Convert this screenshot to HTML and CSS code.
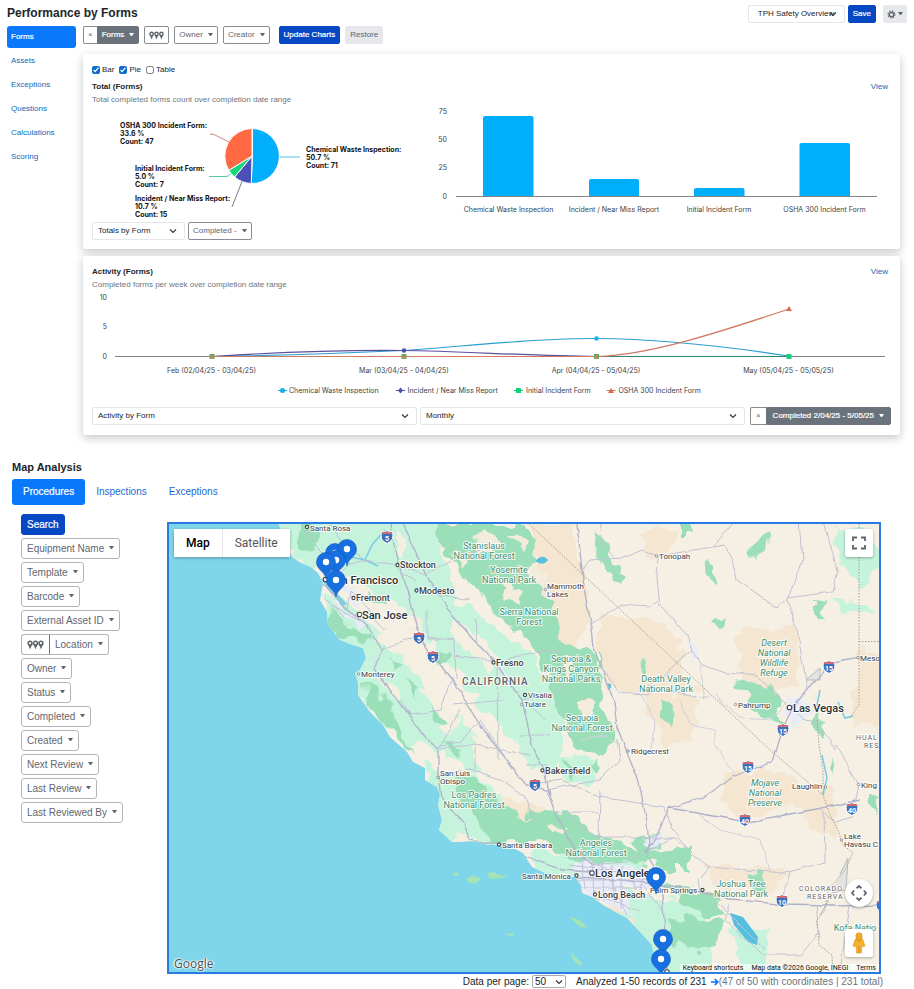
FILE: index.html
```html
<!DOCTYPE html>
<html lang="en">
<head>
<meta charset="utf-8">
<meta name="viewport" content="width=device-width, initial-scale=1">
<title>Performance by Forms</title>
<link rel="stylesheet" href="styles.css">
</head>
<body>
<svg class="defs" aria-hidden="true">
  <defs>
    <symbol id="chevron" viewBox="0 0 8 8"><path d="M1 2.500 4 5.500 7 2.500" fill="none" stroke="#343a40" stroke-width="1.200"/></symbol>
    <symbol id="markers" viewBox="0 0 15 9">
      <g fill="none" stroke="#5c636a" stroke-width="1.400"><circle cx="2.600" cy="2.900" r="1.700"/><circle cx="7.500" cy="2.900" r="1.700"/><circle cx="12.400" cy="2.900" r="1.700"/></g>
      <path d="M.9 4.200h3.400L2.600 8.400zM5.800 4.200h3.400L7.500 8.400zM10.700 4.200h3.400l-1.700 4.200z" fill="#5c636a"/>
    </symbol>
  </defs>
</svg>

<header class="top">
  <h1>Performance by Forms</h1>
  <div class="top-actions">
    <span class="pick pick-view"><select aria-label="Saved view"><option>TPH Safety Overview</option></select><svg><use href="#chevron"/></svg></span>
    <button class="btn primary save">Save</button>
    <button class="btn light gear" aria-label="Settings"><svg width="9" height="9" viewBox="0 0 9 9"><circle cx="4.500" cy="4.500" r="3.400" fill="none" stroke="#5c636a" stroke-width="1.200" stroke-dasharray="1.400 1.270"/><circle cx="4.500" cy="4.500" r="2.200" fill="none" stroke="#5c636a" stroke-width="1.300"/></svg><i class="caret"></i></button>
  </div>
</header>

<div class="performance">
  <nav class="side">
    <a class="active" href="#">Forms</a>
    <a href="#">Assets</a>
    <a href="#">Exceptions</a>
    <a href="#">Questions</a>
    <a href="#">Calculations</a>
    <a href="#">Scoring</a>
  </nav>
  <main class="content">
    <div class="toolbar">
      <span class="group"><button class="btn clear" aria-label="Clear forms">×</button><button class="btn dark">Forms<i class="caret"></i></button></span>
      <button class="btn" aria-label="Locations"><svg width="15" height="9"><use href="#markers"/></svg></button>
      <button class="btn">Owner<i class="caret"></i></button>
      <button class="btn">Creator<i class="caret"></i></button>
      <button class="btn primary update">Update Charts</button>
      <button class="btn light">Restore</button>
    </div>

    <section class="card">
      <div class="checks">
        <label><input type="checkbox" checked>Bar</label>
        <label><input type="checkbox" checked>Pie</label>
        <label><input type="checkbox">Table</label>
      </div>
      <div class="card-head"><h3>Total (Forms)</h3><a href="#">View</a></div>
      <p class="sub">Total completed forms count over completion date range</p>
      <div class="charts">
        <svg class="chart" viewBox="92 106 330 116" role="img" aria-label="Share of completed forms">
          <g stroke="#fff" stroke-width="1">
            <path d="M252.500 156V128.500A27.500 27.500 0 1 1 251.300 183.500Z" fill="#00aefb"/>
            <path d="M252 156 251.300 183.500A27.500 27.500 0 0 1 234.600 177Z" fill="#4b50b8"/>
            <path d="M252 156 234.600 177A27.500 27.500 0 0 1 228.800 170.300Z" fill="#15d77d"/>
            <path d="M252 156 228.800 170.300A27.500 27.500 0 0 1 252 128.500Z" fill="#ff6a43"/>
          </g>
          <g fill="none" stroke-width="1">
            <path d="M280 157H300" stroke="#59bfe3"/>
            <path d="M210 134 214 134.500 229 142" stroke="#c98a7d"/>
            <path d="M209 176.500H226Q229 176.500 231 173.500" stroke="#55c99b"/>
            <path d="M232 207 242 181.500" stroke="#7a7a90"/>
          </g>
          <g class="pie-text">
            <text x="120" y="128">OSHA 300 Incident Form:</text><text x="120" y="136">33.6 %</text><text x="120" y="144">Count: 47</text>
            <text x="135" y="171">Initial Incident Form:</text><text x="135" y="179">5.0 %</text><text x="135" y="187">Count: 7</text>
            <text x="135" y="201">Incident / Near Miss Report:</text><text x="135" y="209">10.7 %</text><text x="135" y="217">Count: 15</text>
            <text x="306" y="152">Chemical Waste Inspection:</text><text x="306" y="160">50.7 %</text><text x="306" y="168">Count: 71</text>
          </g>
        </svg>
        <svg class="chart" viewBox="422 106 469 116" role="img" aria-label="Completed forms by form">
          <g fill="#00aefb">
            <path d="M483 196V118q0-2 2-2h46.500q2 0 2 2v78z"/>
            <path d="M589 196V181q0-2 2-2h46q2 0 2 2v15z"/>
            <path d="M694 196V190q0-2 2-2h46.500q2 0 2 2v6z"/>
            <path d="M799.500 196V145q0-2 2-2h46.500q2 0 2 2v51z"/>
          </g>
          <path d="M456 196.500H877" stroke="#85888b"/>
          <g class="axis end"><text x="447" y="114">75</text><text x="447" y="142">50</text><text x="447" y="170">25</text><text x="447" y="199">0</text></g>
          <g class="axis mid"><text x="508.500" y="212">Chemical Waste Inspection</text><text x="614" y="212">Incident / Near Miss Report</text><text x="719" y="212">Initial Incident Form</text><text x="824.500" y="212">OSHA 300 Incident Form</text></g>
        </svg>
      </div>
      <div class="controls">
        <span class="pick pick-total"><select aria-label="Total grouping"><option>Totals by Form</option></select><svg><use href="#chevron"/></svg></span>
        <button class="btn">Completed -<i class="caret"></i></button>
      </div>
    </section>

    <section class="card activity">
      <div class="card-head"><h3>Activity (Forms)</h3><a href="#">View</a></div>
      <p class="sub">Completed forms per week over completion date range</p>
      <svg class="chart" viewBox="92 291 799 116" role="img" aria-label="Completed forms over time">
        <g class="axis end"><text x="107" y="300">10</text><text x="107" y="329">5</text><text x="107" y="359">0</text></g>
        <path d="M115 356.500H885" stroke="#85888b"/>
        <g fill="none" stroke-width="1.200">
          <path d="M212 356.500C300 355 350 353 404 350.500C460 347 530 338 596.500 338.500C660 339 730 347 789 356" stroke="#2a9fd0"/>
          <path d="M212 356.500C280 352 350 350 404 350.500C460 351 530 356 596.500 356.500" stroke="#5b4f9f"/>
          <path d="M596 356.500H789" stroke="#2f8570"/>
          <path d="M212 356.500H596.500C650 355 720 332 789 309" stroke="#cf7a62"/>
        </g>
        <circle cx="596.500" cy="338.500" r="2.300" fill="#18aee8"/><circle cx="404" cy="350.500" r="2.300" fill="#3e55b5"/>
        <g fill="#69a86c"><path d="M209.500 354h5v5h-5zM401.500 354h5v5h-5zM594 354h5v5h-5z"/></g>
        <g fill="#d88445"><path d="M210 358.500 212 355 214 358.500zM402 358.500 404 355 406 358.500zM594.500 358.500 596.500 355 598.500 358.500z"/></g>
        <path d="M786.500 354h5v5h-5z" fill="#16cf7c"/><path d="M786 311 789 306 792 311z" fill="#e0684f"/>
        <g class="axis mid"><text x="211.500" y="373">Feb (02/04/25 - 03/04/25)</text><text x="404" y="373">Mar (03/04/25 - 04/04/25)</text><text x="596" y="373">Apr (04/04/25 - 05/04/25)</text><text x="788.500" y="373">May (05/04/25 - 05/05/25)</text></g>
        <path d="M278 390.500h9" stroke="#2a9fd0"/><circle cx="282.500" cy="390.500" r="2.500" fill="#18aee8"/>
        <path d="M396 390.500h9" stroke="#5b4f9f"/><path d="M400.500 387.500 403 390.500 400.500 393.500 398 390.500z" fill="#4b4fae"/>
        <path d="M514 390.500h9" stroke="#27bb80"/><path d="M516 388h5v5h-5z" fill="#16cf7c"/>
        <path d="M606.500 390.500h9" stroke="#cf7a62"/><path d="M608 393 611 388 614 393z" fill="#e0684f"/>
        <g class="axis"><text x="289" y="393">Chemical Waste Inspection</text><text x="407.500" y="393">Incident / Near Miss Report</text><text x="526" y="393">Initial Incident Form</text><text x="618.500" y="393">OSHA 300 Incident Form</text></g>
      </svg>
      <div class="controls">
        <span class="pick grow"><select aria-label="Activity grouping"><option>Activity by Form</option></select><svg><use href="#chevron"/></svg></span>
        <span class="pick grow"><select aria-label="Interval"><option>Monthly</option></select><svg><use href="#chevron"/></svg></span>
        <span class="group"><button class="btn clear" aria-label="Clear dates">×</button><button class="btn dark">Completed 2/04/25 - 5/05/25<i class="caret"></i></button></span>
      </div>
    </section>
  </main>
</div>

<section class="analysis">
  <h2>Map Analysis</h2>
  <nav class="tabs"><a class="active" href="#">Procedures</a><a href="#">Inspections</a><a href="#">Exceptions</a></nav>
  <div class="map-layout">
    <div class="filters">
      <button class="btn primary">Search</button>
      <button class="btn">Equipment Name<i class="caret"></i></button>
      <button class="btn">Template<i class="caret"></i></button>
      <button class="btn">Barcode<i class="caret"></i></button>
      <button class="btn">External Asset ID<i class="caret"></i></button>
      <span class="group"><button class="btn" aria-label="Map locations"><svg width="17" height="10"><use href="#markers"/></svg></button><button class="btn">Location<i class="caret"></i></button></span>
      <button class="btn">Owner<i class="caret"></i></button>
      <button class="btn">Status<i class="caret"></i></button>
      <button class="btn">Completed<i class="caret"></i></button>
      <button class="btn">Created<i class="caret"></i></button>
      <button class="btn">Next Review<i class="caret"></i></button>
      <button class="btn">Last Review<i class="caret"></i></button>
      <button class="btn">Last Reviewed By<i class="caret"></i></button>
    </div>
    <div class="map-column">
      <div class="map">
        <svg class="map-art" viewBox="169 524 710 448" role="img" aria-label="Map of California and Nevada">
          <defs>
            <clipPath id="land"><path d="M278 520 282 535 292 557 301 563 311 567 318 573 323 583 320 600 327 612 328 625 340 640 353 645 363 648 366 658 360 670 355 673 358 682 358 695 370 712 383 725 390 737 407 752 413 762 425 768 425 780 437 787 440 795 438 805 442 820 439 830 452 842 473 841 488 845 507 845 523 853 532 867 545 873 575 877 581 885 582 893 592 897 603 905 627 918 643 935 652 945 655 962 662 975H885V520Z"/></clipPath>
            <filter id="rough" x="-5%" y="-5%" width="110%" height="110%"><feTurbulence type="fractalNoise" baseFrequency=".06" numOctaves="2" seed="4"/><feDisplacementMap in="SourceGraphic" scale="20" xChannelSelector="R" yChannelSelector="G"/></filter>
            <filter id="wobble" x="-5%" y="-5%" width="110%" height="110%"><feTurbulence type="fractalNoise" baseFrequency=".06" numOctaves="2" seed="9"/><feDisplacementMap in="SourceGraphic" scale="5" xChannelSelector="R" yChannelSelector="G"/></filter>
            <symbol id="pin" viewBox="-11 -11 22 30" overflow="visible"><path d="M0 17C-1 9-9.500 8-9.500 0A9.500 9.500 0 0 1 9.500 0C9.500 8 1 9 0 17Z" fill="#176fe0" stroke="#1059bd" stroke-width=".6"/><circle r="3.200" fill="#fff"/></symbol>
            <g id="shield"><path d="M-5-5.500Q-2.500-4.800 0-6.200Q2.500-4.800 5-5.500Q8.500 3 0 6.500Q-8.500 3-5-5.500Z" fill="#3b70bd" stroke="#fff" stroke-width="1"/><path d="M-4.800-5Q-2.500-4.300 0-5.700Q2.500-4.300 4.800-5L5.500-3H-5.500Z" fill="#d46a70"/></g>
          </defs>
          <rect x="165" y="520" width="720" height="456" fill="#7fd5ea"/>
          <g clip-path="url(#land)">
            <rect x="270" y="515" width="620" height="465" fill="#f5f0e3"/>
            <g filter="url(#rough)">
              <g fill="#f5e6d1">
                <path d="M600 615 650 620 685 640 680 672 700 690 670 696 610 690 596 650zM740 627H798V690L760 695 738 670zM728 770 775 772 810 790 800 808 740 818 722 800zM640 690 700 700 690 740 665 750 650 720zM530 523 570 523 585 570 590 620 570 660 550 640 540 600zM860 650H890V720L850 725zM610 905 690 925 700 970 640 975zM705 865 790 870 770 892 715 890zM640 530 675 528 670 560 645 555zM795 790 830 785 840 840 815 830z"/>
                <path d="M500 800 540 805 560 825 535 835 505 820zM620 900 650 905 640 925z"/>
              </g>
              <g fill="#c5f3dc">
                <path d="M275 515 430 515 445 550 455 595 485 620 530 655 553 685 563 730 558 770 530 770 505 730 475 700 448 662 425 640 405 610 385 600 350 575 290 560z"/>
                <path d="M320 590 350 605 375 625 400 650 430 690 470 730 490 760 480 780 455 760 430 748 400 742 370 710 350 680 335 640z"/>
                <path d="M425 765 470 775 500 795 520 830 500 848 440 845zM530 850 640 860 655 880 600 880 540 875zM600 885 660 900 705 905 715 970 660 978 640 930zM730 925 768 930 770 965 745 972 735 950z"/>
                <path d="M835 525 870 530 880 560 865 590 840 560zM830 595 870 605 875 615 840 610zM560 755 600 760 590 785 560 780z"/>
              </g>
              <g fill="#f5efe2"><path d="M385 620 405 630 425 650 440 680 425 680 400 655 380 640zM425 690 445 695 460 725 450 735 432 715zM375 675 390 680 400 700 388 700zM470 735 500 755 520 780 500 785 475 765zM395 530 410 535 405 560 395 550zM455 620 475 630 500 655 490 670 465 650 452 635zM440 850 460 835 480 840z"/></g>
              <g fill="#9bdfb8">
                <path d="M432 523 522 523 535 545 530 575 550 600 557 635 588 650 603 680 605 720 615 735 610 755 580 750 567 730 555 705 550 680 530 640 505 625 485 600 460 575 447 550z"/>
                <path d="M300 523 325 527 315 548 297 550zM330 608 347 622 372 640 355 644 333 632zM365 680 383 700 405 735 415 752 390 730 367 705zM455 775 480 785 515 815 555 830 535 842 492 842 472 815 455 795z"/>
                <path d="M525 810 575 815 605 840 655 855 690 845 690 868 660 868 630 860 580 862 545 845 530 830zM670 915 700 920 725 918 715 945 695 950 672 945zM645 880 685 888 720 900 730 915 700 915z"/>
                <path d="M680 523 695 523 692 535 680 535zM748 545 770 530 765 550 752 563zM705 560 717 575 717 588 707 575zM735 685 760 680 780 700 780 730 765 720zM590 530 605 545 625 580 620 585 600 560zM745 870 765 875 760 890 745 882zM630 840 655 835 658 850 645 855z"/>
                <path d="M662 700 672 705 670 725 662 720zM598 650 605 665 598 670zM640 660 648 675 641 675zM712 622 725 617 722 628zM815 600 825 602 823 622 815 615zM815 710 828 720 822 735 812 725zM830 755 838 775 831 772zM870 790 878 795 874 815 868 808z"/>
              </g>
              <g fill="#f3ecdc"><path d="M472 532 488 530 498 545 480 553zM452 550 467 560 462 572zM503 580 522 590 518 605 503 598zM560 655 575 665 570 680zM580 700 595 705 595 720 580 715zM530 560 545 575 537 585zM410 610 420 620 413 635zM550 820 570 830 555 833zM505 535 525 540 520 550z"/></g>
              <g fill="#9bdfb8"><path d="M370 595 385 600 383 612zM387 655 403 662 397 672zM407 680 423 690 415 700zM427 705 445 720 435 722zM445 740 460 745 455 755zM430 650 448 655 442 665zM565 760 577 765 573 780zM590 765 600 760 597 775z"/></g>
            </g>
            <g fill="#e9ebf7" filter="url(#rough)"><path d="M573 860 613 865 658 868 663 888 623 888 635 915 603 900 583 888zM788 695 803 698 811 715 793 725 785 712zM329 595 341 610 365 620 361 628 338 612zM339 572 353 590 363 605 355 605 341 590zM495 662 507 664 503 676zM692 640 698 640 696 665 690 658zM643 840 659 835 653 850zM599 788 609 790 605 800z"/></g>
            <path d="M322 580Q330 570 341 563L337 573 334 590 347 604 343 606 331 593Z" fill="#78cfe6"/>
            <g fill="none" stroke="#79cbe4" stroke-width="1.500"><path d="M345 556 365 560 372 545 385 530M365 560 378 566M820 690 816 710M838 702 845 718 853 716M822 755 827 778 823 795"/></g>
            <path d="M730 913 743 917 758 937 757 945 748 942 734 925Z" fill="#55bfdf"/>
            <path d="M535 561Q543 553 548 560Q543 567 535 561M607 684Q612 682 611 688L608 690Z" fill="#55bfdf"/>
            <path d="M840 874 848 858 846 890 832 893 826 905 820 915M806 680 820 668 820 680Z" fill="#e3e3df" stroke="#b8b9bd"/>
            <g filter="url(#wobble)" fill="none" stroke="#c0c1d4" stroke-width="1">
              <path stroke="#b0b2cb" stroke-width="1.300" d="M390 524 397 560 408 590 420 638 434 657 452 680 468 705 487 735 507 760 527 785 547 790 555 812 574 850 592 865M402 524 427 575 452 615 497 665 522 700 532 745 544 770 550 795M324 583 347 610 367 625 382 650 374 670 397 700 427 740 439 750 439 775 442 800 464 822 469 840 502 845 530 858 562 870 592 872"/>
              <path stroke="#b0b2cb" stroke-width="1.300" d="M577 524 582 570 585 595 592 627 594 648 602 668 614 702 617 728 625 748 639 782 647 823 649 845 647 855M860 658 832 663 807 690 792 708 780 735 772 762 732 777 702 798 669 808 655 838 645 852 655 868 662 895 664 918 667 970M669 808 747 822 822 808 860 800M577 877 622 880 662 885 707 892 722 898 784 905 832 906 885 905"/>
              <path d="M582 570 590 561 622 559 642 550 658 556 712 547 724 545 732 560 737 580 777 608 787 600 802 560 799 520M658 556 657 580 660 605 687 635 692 650 702 665 727 673 757 676 772 690 787 705M787 600 797 630 804 670 807 690M824 520 837 570 832 592 787 598M600 520 603 545 614 560M735 520 712 547M590 625 605 615 620 605 650 607 658 600M602 668 618 690 640 695 665 690 700 697 709 697M692 650 670 670 655 682 635 695"/>
              <path d="M527 785 562 780 599 797 665 807M600 790 599 838 675 838 709 867 785 873 825 862 824 812M665 808 672 830 690 850M599 838 565 815M672 838 648 850M835 745 859 785 852 817 835 822 820 808M792 708 805 720 815 722 830 740 835 750M709 867 698 880 700 892M730 905 725 920 762 955 800 955 820 930M790 873 782 905M720 905 765 950M816 905 820 940M850 905 840 970M642 885 662 910M640 855 625 862 590 865"/>
              <path d="M332 583 347 565 365 560 397 565M347 610 350 590 360 600 385 630M305 530 320 550 335 565M330 524 345 545 365 560M382 650 405 640 420 638M374 670 385 645M397 570 415 580M400 565 425 575 450 560 480 550M416 590 470 600M427 610V640H455M427 638 455 640 456 680M455 655 497 662M475 620 477 645 497 662M452 705 505 700M452 680 440 710 410 715 400 700M505 660 520 655 560 650M497 665 498 760M522 700 550 695 570 680M530 705 545 720M460 710 450 730 437 750M437 748 475 745 475 770M439 775 470 770 500 780 527 800 535 820M475 745 530 755M440 745 460 742 480 720 507 760M520 735H550M525 765H548M545 790 600 780 620 760 617 740M555 812H598"/>
              <path d="M323 595 345 618M330 605 362 622M570 865 640 875M575 870 580 895 600 900M582 860 585 890M592 860 594 897M602 860 604 900M612 865 614 905M622 866 622 910M575 880H655M580 888H640M600 895 640 912M605 870 628 915M632 870 635 890M645 870 640 890M572 855 610 870"/>
              <path stroke="#d0d0dc" d="M680 700 690 725 715 730 715 745 735 775M785 705 770 720 740 718 715 695M700 665 705 700M640 695 655 720 650 755M620 745 605 735 580 740M770 870 760 840 720 830 700 815"/>
            </g>
            <g fill="none" stroke="#a79f92" stroke-width="1" stroke-dasharray="1.500 1.500"><path d="M529 524 770 750 823 795 830 815 838 830 843 845 853 853 845 870 828 890 825 910 817 920 819 945 832 955 833 975M859 524V705L850 718M859 641.500H885M817 720 819 745 823 770V795"/></g>
          </g>
          <g fill="#a3e3b5"><path d="M452 874 457 872 460 875 454 876zM466 879 473 875 481 879 475 884 467 882zM487 873 493 872 502 876 510 874 503 878 490 879zM507 933 514 934 513 936 507 935zM569 917 580 920 588 928 580 927zM570 952 583 964 580 966 573 960z"/></g>
          <use href="#shield" x="387" y="537"/><use href="#shield" x="419" y="638"/><use href="#shield" x="433" y="657"/><use href="#shield" x="535" y="785"/><use href="#shield" x="829" y="667"/><use href="#shield" x="783" y="730"/><use href="#shield" x="748" y="767"/><use href="#shield" x="745" y="820"/><use href="#shield" x="852" y="809"/><use href="#shield" x="782" y="901"/><use href="#shield" x="882" y="906"/>
          <g class="route"><text x="387" y="541">5</text><text x="419" y="642">5</text><text x="433" y="661">5</text><text x="535" y="789">5</text><text x="829" y="671">15</text><text x="783" y="734">15</text><text x="748" y="771">15</text><text x="745" y="824">40</text><text x="852" y="813">40</text><text x="782" y="905">10</text></g>
          <g fill="#fff" stroke="#3c4043" stroke-width="1.100"><circle cx="325.500" cy="579.500" r="2.300"/><circle cx="359.500" cy="614.500" r="2.300"/><circle cx="789.500" cy="707.500" r="2.300"/><circle cx="592" cy="873" r="2.300"/><circle cx="667" cy="972" r="2.300"/><circle cx="307" cy="527" r="1.600"/><circle cx="397.500" cy="565" r="1.600"/><circle cx="353.500" cy="598" r="1.600"/><circle cx="416.500" cy="590.500" r="1.600"/><circle cx="493.500" cy="662.500" r="1.600"/><circle cx="525" cy="695" r="1.600"/><circle cx="542.500" cy="770.500" r="1.600"/><circle cx="499" cy="844.500" r="1.600"/><circle cx="576.500" cy="875.500" r="1.600"/><circle cx="595" cy="894.500" r="1.600"/><circle cx="702.500" cy="890" r="1.600"/></g>
          <g fill="#fff" stroke="#777b80" stroke-width=".8"><circle cx="656.500" cy="556" r="1.200"/><circle cx="545.500" cy="589.500" r="1.200"/><circle cx="358.500" cy="674" r="1.200"/><circle cx="521.500" cy="704.500" r="1.200"/><circle cx="438" cy="777.500" r="1.200"/><circle cx="735.500" cy="704.500" r="1.200"/><circle cx="628" cy="751" r="1.200"/><circle cx="858" cy="657.500" r="1.200"/><circle cx="858.500" cy="784.500" r="1.200"/><circle cx="825.500" cy="787" r="1.200"/><circle cx="841.500" cy="840" r="1.200"/></g>
          <g class="park mid">
            <text x="484" y="549">Stanislaus</text><text x="484" y="559">National Forest</text><text x="509" y="573">Yosemite</text><text x="509" y="583">National Park</text>
            <text x="529" y="615">Sierra National</text><text x="529" y="625">Forest</text><text x="571" y="662">Sequoia &amp;</text><text x="571" y="672">Kings Canyon</text><text x="571" y="682">National Parks</text>
            <text x="582" y="721">Sequoia</text><text x="582" y="731">National Forest</text><text x="666" y="682">Death Valley</text><text x="666" y="692">National Park</text>
            <text x="474" y="798">Los Padres</text><text x="474" y="808">National Forest</text><text x="596" y="846">Angeles</text><text x="596" y="856">National Forest</text><text x="741" y="887">Joshua Tree</text><text x="741" y="897">National Park</text><text x="855" y="931">Kofa Natio</text>
            <g class="refuge"><text x="774" y="646">Desert</text><text x="774" y="656">National</text><text x="774" y="666">Wildlife</text><text x="774" y="676">Refuge</text><text x="765" y="786">Mojave</text><text x="765" y="796">National</text><text x="765" y="806">Preserve</text></g>
          </g>
          <g class="major"><text x="329" y="584">San Francisco</text><text x="362" y="619">San Jose</text><text x="793" y="712">Las Vegas</text><text x="595" y="877">Los Angeles</text></g>
          <g class="city"><text x="400" y="568">Stockton</text><text x="356" y="601">Fremont</text><text x="419" y="594">Modesto</text><text x="496" y="666">Fresno</text><text x="545" y="774">Bakersfield</text><text x="598" y="898">Long Beach</text></g>
          <g class="town"><text x="310" y="531">Santa Rosa</text><text x="361" y="677">Monterey</text><text x="547" y="589">Mammoth</text><text x="547" y="597">Lakes</text><text x="659" y="559">Tonopah</text><text x="528" y="698">Visalia</text><text x="524" y="707">Tulare</text><text x="440" y="776">San Luis</text><text x="440" y="784">Obispo</text><text x="502" y="848">Santa Barbara</text><text x="522" y="879">Santa Monica</text><text x="650" y="893">Palm Springs</text><text x="738" y="708">Pahrump</text><text x="631" y="754">Ridgecrest</text><text x="860" y="661">Meso</text><text x="792" y="789">Laughlin</text><text x="861" y="788">King</text><text x="844" y="839">Lake</text><text x="844" y="847">Havasu C</text></g>
          <g class="region"><text class="state" x="462" y="685">CALIFORNIA</text><text x="856" y="740">HUAL</text><text x="864" y="748">RES</text><text x="799" y="891">COLORADO</text><text x="807" y="899">RESERVA</text></g>
          <g><use href="#pin" x="335" y="553" width="22" height="30" transform="translate(-11 -11)"/><use href="#pin" x="347" y="549" width="22" height="30" transform="translate(-11 -11)"/><use href="#pin" x="336" y="560" width="22" height="30" transform="translate(-11 -11)"/><use href="#pin" x="326" y="562" width="22" height="30" transform="translate(-11 -11)"/><use href="#pin" x="336" y="580" width="22" height="30" transform="translate(-11 -11)"/><use href="#pin" x="656" y="877" width="22" height="30" transform="translate(-11 -11)"/><use href="#pin" x="663" y="939" width="22" height="30" transform="translate(-11 -11)"/><use href="#pin" x="661" y="959" width="22" height="30" transform="translate(-11 -11)"/></g>
        </svg>
        <div class="map-type"><button class="on">Map</button><button>Satellite</button></div>
        <button class="map-btn full" aria-label="Fullscreen"><svg width="14" height="14" viewBox="0 0 14 14"><path d="M1 5V1.500H5M9 1.500H13V5M13 9V12.500H9M5 12.500H1V9" fill="none" stroke="#5f6368" stroke-width="1.800"/></svg></button>
        <button class="map-btn pan" aria-label="Camera controls"><svg width="16" height="16" viewBox="0 0 16 16"><path d="M5.500 3.200 8 1 10.500 3.200M5.500 12.800 8 15 10.500 12.800M3.200 5.500 1 8 3.200 10.500M12.800 5.500 15 8 12.800 10.500" fill="none" stroke="#5f6368" stroke-width="1.800"/></svg></button>
        <button class="map-btn person" aria-label="Street view"><svg width="14" height="22" viewBox="0 0 14 22"><path d="M3 8Q3 6.500 5 6.500H9Q11 6.500 11 8L13 14 11.500 15 10 13 9.500 21H4.500L4 13 2.500 15 1 14Z" fill="#f5b22d" stroke="#dc9420" stroke-width=".6"/><circle cx="7" cy="4" r="3.200" fill="#efab27" stroke="#d68a19" stroke-width=".6"/><path d="M4.500 7.500 7 9.500 9.500 7.500M7 14V21" fill="none" stroke="#c97d16" stroke-width=".8"/></svg></button>
        <span class="google">Google</span>
        <div class="attribution"><a href="#">Keyboard shortcuts</a><span>Map data ©2026 Google, INEGI</span><a href="#">Terms</a></div>
      </div>
      <div class="records">
        <label for="per-page">Data per page:</label>
        <span class="pick per"><select id="per-page"><option>50</option></select><svg><use href="#chevron"/></svg></span>
        <span class="analyzed">Analyzed 1-50 records of 231</span>
        <a class="next" href="#" aria-label="Next page"><svg width="8" height="8" viewBox="0 0 8 8"><path d="M0 4H6.500M3.800 1 6.800 4 3.800 7" fill="none" stroke="#0d6efd" stroke-width="1.700"/></svg></a>
        <span class="muted">(47 of 50 with coordinates | 231 total)</span>
      </div>
    </div>
  </div>
</section>
</body>
</html>
```
FILE: styles.css
```css
* { box-sizing: border-box; }
body { margin: 0; background: #fff; color: #212529; font: 8px/12px "Liberation Sans", Arial, sans-serif; }
h1, h2, h3, p { margin: 0; }
a { color: #0d6ab8; text-decoration: none; }
button, select, input { font: inherit; margin: 0; }
svg { display: block; }
.defs { position: absolute; width: 0; height: 0; }

.btn { display: inline-flex; align-items: center; justify-content: center; gap: 5px; height: 18px; padding: 0 4px; border: 1px solid #868c92; border-radius: 2px; background: #fff; color: #5f666d; white-space: nowrap; }
.btn.primary { border-color: #0648c4; background: #0648c4; color: #fff; -webkit-text-stroke: .2px #fff; }
.btn.light { border-color: #e6e8eb; background: #e6e8eb; }
.btn.dark { border-color: #6a737b; background: #6a737b; color: #fff; -webkit-text-stroke: .2px #fff; }
.btn.clear { padding: 0 4px; }
.caret { width: 5px; height: 0; margin-bottom: 2px; border: solid transparent; border-width: 3px 2px 0; border-top-color: currentColor; }
.group { display: inline-flex; }
.group .btn:first-child { border-radius: 2px 0 0 2px; border-right-width: 0; }
.group .btn:last-child { border-radius: 0 2px 2px 0; }

.pick { position: relative; display: inline-block; }
.pick select { appearance: none; display: block; width: 100%; height: 18px; padding: 0 5px; border: 1px solid #e4e6e9; border-radius: 2px; background: #fff; color: #212529; }
.pick svg { position: absolute; right: 8px; top: 5px; width: 8px; height: 8px; pointer-events: none; }

.top { display: flex; justify-content: space-between; height: 26px; padding: 5px 7px 0; }
.top h1 { font-size: 12px; line-height: 16px; }
.top-actions { display: flex; align-items: flex-start; }
.pick-view { width: 97px; }
.pick-view select { padding-left: 9px; }
.save { margin: 0 7px 0 3px; }
.gear { gap: 2px; padding: 0 3px; }

.performance { display: flex; gap: 7px; padding: 0 14px 0 7px; }
.side { display: flex; flex-direction: column; flex: none; width: 69px; }
.side a { height: 24px; padding: 6px 4px; }
.side .active { height: 22px; margin-bottom: 1px; padding: 5px 4px; border-radius: 3px; background: #0a78fa; color: #fff; -webkit-text-stroke: .2px #fff; }
.content { flex: 1; min-width: 0; }
.toolbar { display: flex; gap: 5px; margin-bottom: 10px; }
.toolbar .update { margin-left: 4px; }

.card { margin-bottom: 7px; padding: 9px; border-radius: 3px; background: #fff; box-shadow: 0 3px 9px rgba(20, 30, 40, .25); }
.activity { padding: 10px 9px; }
.card h3 { font-size: 8px; line-height: 12px; }
.card-head { display: flex; justify-content: space-between; padding-right: 3px; }
.sub { color: #6c757d; line-height: 13px; }
.checks { display: flex; gap: 5px; margin-bottom: 5px; }
.checks label { display: flex; align-items: center; gap: 2px; height: 13px; }
.checks input { width: 8px; height: 8px; accent-color: #0b6cc9; }
.charts { display: grid; grid-template-columns: 330fr 469fr; }
.chart { width: 100%; height: auto; font-family: Inter, sans-serif; }
.axis { font-size: 7px; fill: #3c4146; }
.end { text-anchor: end; }
.mid { text-anchor: middle; }
.pie-text { font-size: 7px; font-weight: 700; fill: #111; }
.controls { display: flex; gap: 3px; }
.controls .group { margin-left: 2px; }
.controls .clear { padding: 0 5px; }
.controls .dark { padding: 0 6px; }
.pick-total { width: 93px; }
.grow { flex: 1; }

.analysis { padding: 18px 31px 0 12px; font-size: 10px; }
.analysis h2 { font-size: 11px; line-height: 14px; }
.tabs { display: flex; margin-top: 5px; }
.tabs a { padding: 7px 11px; color: #1769d2; }
.tabs .active { border-radius: 3px; background: #0a78fa; color: #fff; -webkit-text-stroke: .2px #fff; }
.map-layout { display: grid; grid-template-columns: 146px 1fr; padding: 9px 0 0 9px; }
.filters { display: flex; flex-direction: column; align-items: flex-start; gap: 3px; }
.filters .btn { height: 21px; padding: 0 5px; border-color: #b2b6ba; border-radius: 3px; }
.filters .btn.primary { border-color: #0648c4; }
.filters .group .btn:first-child { border-radius: 3px 0 0 3px; }
.filters .group .btn:last-child { border-radius: 0 3px 3px 0; border-left-color: #6c757d; }

.map-column { min-width: 0; padding-top: 8px; }
.map { position: relative; margin-right: 2px; border: 2px solid #287cdf; font-family: Roboto, sans-serif; }
.map-art { width: 100%; height: auto; }
.map-art text { paint-order: stroke; stroke: rgba(255, 255, 255, .85); stroke-width: 2px; stroke-linejoin: round; }
.park { font-size: 9px; fill: #3c8e70; }
.refuge { font-style: italic; }
.major { font-size: 11px; font-weight: 500; fill: #2c3034; }
.city { font-size: 9px; font-weight: 500; fill: #3c4043; }
.town { font-size: 8px; fill: #3c4146; }
.region { font-size: 7px; letter-spacing: 1px; fill: #5f6368; }
.region .state { font-size: 10px; font-weight: 500; }
.map-art .route text { font-size: 7px; font-weight: 700; fill: #fff; stroke: none; text-anchor: middle; }

.map-type { position: absolute; top: 5px; left: 5px; display: flex; background: #fff; box-shadow: 0 1px 3px rgba(0, 0, 0, .3); }
.map-type button { height: 28px; padding: 0 12px; border: 0; background: none; color: #565656; font-size: 12px; }
.map-type button + button { border-left: 1px solid #e6e6e6; }
.map-type .on { color: #000; font-weight: 500; }
.map-btn { position: absolute; right: 6px; display: flex; align-items: center; justify-content: center; width: 28px; height: 28px; padding: 0; border: 0; border-radius: 2px; background: #fff; box-shadow: 0 1px 3px rgba(0, 0, 0, .3); }
.full { top: 5px; }
.pan { bottom: 65px; border-radius: 50%; }
.person { bottom: 15px; }
.google { position: absolute; left: 5px; bottom: 0; color: #4a4f54; font: 500 12px/16px "Open Sans", sans-serif; text-shadow: 0 0 2px #fff, 0 0 2px #fff, 1px 0 1px #fff, -1px 0 1px #fff; }
.attribution { position: absolute; right: 0; bottom: 0; display: flex; gap: 8px; padding: 0 3px; background: rgba(255, 255, 255, .6); font-size: 7px; line-height: 8px; }
.attribution, .attribution a { color: #111; }

.records { display: flex; align-items: center; justify-content: flex-end; height: 15px; white-space: nowrap; }
.per { width: 34px; margin: 0 10px 0 3px; }
.per select { height: 13px; padding: 0 2px; border-color: #a9adb1; }
.per svg { right: 3px; top: 3px; }
.next { margin-left: 4px; }
.muted { color: #6c757d; }
```
